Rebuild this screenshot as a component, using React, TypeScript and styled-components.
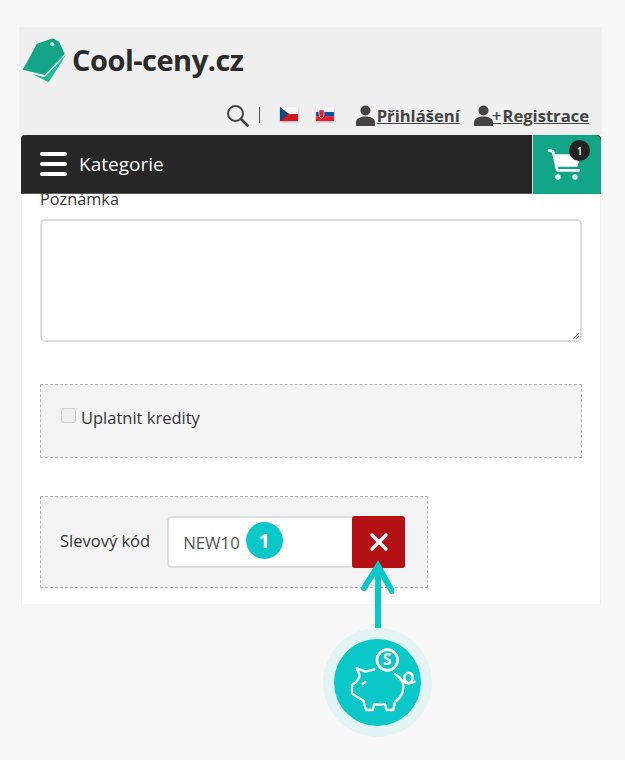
import styled, { createGlobalStyle } from 'styled-components';

const GlobalStyle = createGlobalStyle`
	html, body {
		margin: 0;
		padding: 0;
		background: #f7f7f7;
	}
	body {
		font-family: 'Open Sans', 'Liberation Sans', sans-serif;
		color: #333;
	}
`;

const Page = styled.div`
	position: relative;
	width: 625px;
	height: 760px;
	padding: 27px 23px 0 19px;
	box-sizing: border-box;
	overflow: hidden;
`;

const Header = styled.header`
	height: 108px;
	background: #efefef;
	box-sizing: border-box;
	padding: 10px 13px 0 3px;
	display: flex;
	flex-direction: column;
`;

const LogoRow = styled.div`
	display: flex;
	align-items: center;
	gap: 5px;
	height: 46px;
`;

const LogoText = styled.span`
	font-size: 29px;
	font-weight: 700;
	letter-spacing: -0.5px;
	color: #2b2b2b;
	line-height: 46px;
`;

const TopLinks = styled.div`
	display: flex;
	align-items: center;
	justify-content: flex-end;
	height: 30px;
	margin-top: 17px;
`;

const Divider = styled.span`
	width: 1px;
	height: 16px;
	background: #555;
	margin: 0 20px 0 10px;
`;

const Flag = styled.svg`
	display: block;
	margin-top: -2px;
	filter: drop-shadow(0 1px 1px rgba(0, 0, 0, 0.25));
`;

const FlagGap = styled.span`
	width: 18px;
`;

const UserLink = styled.a<{ $left: number }>`
	display: flex;
	align-items: center;
	margin-left: ${({ $left }) => $left}px;
	font-size: 16.6px;
	font-weight: 700;
	color: #444;
	text-decoration: underline;
	gap: 1px;
`;

const Plus = styled.span`
	font-size: 17px;
	font-weight: 600;
	color: #444;
	margin: 0 0 0 -3px;
	text-decoration: none;
`;

const Nav = styled.nav`
	display: flex;
	height: 59px;
	margin: 0 1px 0 2px;
	background: #272727;
	border-radius: 4px 4px 0 0;
	border-bottom: 1px solid #555;
	box-sizing: border-box;
`;

const MenuButton = styled.div`
	flex: 1;
	display: flex;
	align-items: center;
	padding-left: 19px;
	gap: 12px;
	color: #fff;
	font-size: 19px;
`;

const Burger = styled.div`
	display: flex;
	flex-direction: column;
	gap: 6px;
	width: 27px;

	i {
		display: block;
		height: 4px;
		border-radius: 2px;
		background: #fff;
	}
`;

const CartButton = styled.div`
	position: relative;
	width: 69px;
	height: 59px;
	background: #13a587;
	border-left: 1px solid #ddd;
	border-radius: 0 6px 0 0;
	box-sizing: border-box;
	display: flex;
	align-items: center;
	justify-content: center;
`;

const CartBadge = styled.span`
	position: absolute;
	top: 5px;
	right: 11px;
	width: 21px;
	height: 21px;
	border-radius: 50%;
	background: #222;
	color: #fff;
	font-size: 10px;
	font-weight: 600;
	display: flex;
	align-items: center;
	justify-content: center;
`;

const Content = styled.main`
	height: 410px;
	margin: 0 1px 0 2px;
	background: #fff;
	border: 1px solid #efefef;
	border-width: 0 1px;
	box-sizing: border-box;
	padding: 0 18px;
	overflow: hidden;
`;

const NoteLabel = styled.label`
	display: block;
	font-size: 16.3px;
	line-height: 22px;
	margin-top: -6px;
	color: #333;
`;

const NoteArea = styled.div`
	position: relative;
	height: 123px;
	margin-top: 9px;
	background: #fff;
	border: 2px solid #dedede;
	border-radius: 5px;
	box-sizing: border-box;
`;

const Dashed = styled.div<{ $width: string; $height: number; $top: number }>`
	display: flex;
	align-items: center;
	width: ${({ $width }) => $width};
	height: ${({ $height }) => $height}px;
	margin-top: ${({ $top }) => $top}px;
	background: #f3f3f3;
	border: 1px dashed #b5b5b5;
	box-sizing: border-box;
	padding-left: 19px;
	font-size: 16.5px;
	color: #333;
`;

const CheckBox = styled.span`
	width: 15px;
	height: 15px;
	margin: -12px 5px 0 1px;
	background: #efefef;
	border: 1px solid #ccc;
	border-radius: 3px;
	box-sizing: border-box;
`;

const CreditText = styled.span`
	margin-top: -7px;
`;

const CodeLabel = styled.span`
	margin-right: 17px;
	margin-top: -4px;
`;

const CodeField = styled.div`
	display: flex;
	align-items: center;
	width: 186px;
	height: 52px;
	background: #fff;
	border: 2px solid #dedede;
	border-right: 0;
	border-radius: 5px 0 0 5px;
	box-sizing: border-box;
	padding-left: 14px;
	font-size: 16.8px;
	color: #555;
`;

const CodeStep = styled.span`
	width: 37px;
	height: 37px;
	margin-left: 6px;
	margin-top: -3px;
	border-radius: 50%;
	background: #0bc8c8;
	color: #fff;
	font-size: 20px;
	font-weight: 700;
	display: flex;
	align-items: center;
	justify-content: center;
`;

const RemoveButton = styled.div`
	width: 53px;
	height: 52px;
	margin-left: -1px;
	background: #b40f12;
	border-radius: 3px;
	display: flex;
	align-items: center;
	justify-content: center;
`;

const ArrowMark = styled.svg`
	position: absolute;
	left: 360px;
	top: 560px;
`;

const PiggyHalo = styled.div`
	position: absolute;
	left: 323px;
	top: 628px;
	width: 109px;
	height: 109px;
	border-radius: 50%;
	background: #e3f4f5;
	display: flex;
	align-items: center;
	justify-content: center;
`;

const PiggyDisc = styled.div`
	width: 87px;
	height: 87px;
	border-radius: 50%;
	background: #0bc8c8;
	display: flex;
	align-items: center;
	justify-content: center;
`;

const UserIcon = ({ size = 21 }: { size?: number }) => (
	<svg width={size} height={size} viewBox="0 0 21 21" fill="#444">
		<circle cx="10.5" cy="5.5" r="5" />
		<path d="M1 21v-3.5C1 14 4.5 11.5 10.5 11.5S20 14 20 17.5V21Z" />
	</svg>
);

export default function App() {
	return (
		<>
			<GlobalStyle />
			<Page>
				<Header>
					<LogoRow>
						<svg width="45" height="46" viewBox="20 20 135 138">
							<path
								d="M22 118 L65 40 L108 25 Q114 23 118 27 L131 34 L147 68 Q148 72 145 75 L88 134 Z"
								fill="#13a587"
							/>
							<circle cx="111" cy="42" r="6" fill="#efefef" />
							<path d="M50 131 L88 141 L153 72 L100 156 Z" fill="#1dbd9c" />
						</svg>
						<LogoText>Cool-ceny.cz</LogoText>
					</LogoRow>
					<TopLinks>
						<svg width="23" height="23" viewBox="0 0 23 23" fill="none" stroke="#444" strokeWidth="2">
							<circle cx="9.5" cy="9.5" r="7.5" />
							<path d="M15 15l6.5 6.5" strokeWidth="2.6" strokeLinecap="round" />
						</svg>
						<Divider />
						<Flag width="18" height="14" viewBox="0 0 18 14">
							<rect width="18" height="7" fill="#f4f4f4" />
							<rect y="7" width="18" height="7" fill="#d7141a" />
							<path d="M0 0 L9 7 L0 14 Z" fill="#11457e" />
						</Flag>
						<FlagGap />
						<Flag width="18" height="14" viewBox="0 0 18 14">
							<rect width="18" height="5" fill="#f4f4f4" />
							<rect y="5" width="18" height="4.5" fill="#0b4ea2" />
							<rect y="9.5" width="18" height="4.5" fill="#ee1c25" />
							<path d="M3 3h5v5q0 2-2.5 3Q3 10 3 8Z" fill="#ee1c25" stroke="#fff" strokeWidth="0.6" />
						</Flag>
						<UserLink $left={21}>
							<UserIcon />
							Přihlášení
						</UserLink>
						<UserLink $left={13}>
							<UserIcon />
							<Plus>+</Plus>
							Registrace
						</UserLink>
					</TopLinks>
				</Header>
				<Nav>
					<MenuButton>
						<Burger>
							<i />
							<i />
							<i />
						</Burger>
						Kategorie
					</MenuButton>
					<CartButton>
						<svg width="44" height="33" viewBox="45 55 132 99" fill="#fff">
							<path
								d="M57 62L69 65L82 122H146"
								fill="none"
								stroke="#fff"
								strokeWidth="8"
								strokeLinecap="round"
								strokeLinejoin="round"
							/>
							<path d="M70 74H155L142 111H79Z" />
							<circle cx="84" cy="142" r="8" />
							<circle cx="135" cy="142" r="8" />
						</svg>
						<CartBadge>1</CartBadge>
					</CartButton>
				</Nav>
				<Content>
					<NoteLabel>Poznámka</NoteLabel>
					<NoteArea>
						<svg
							width="6"
							height="6"
							viewBox="0 0 6 6"
							style={{ position: 'absolute', right: 1, bottom: 1 }}
							stroke="#888"
							strokeWidth="0.8"
						>
							<path d="M0 6L6 0M3 6L6 3" />
						</svg>
					</NoteArea>
					<Dashed $width="100%" $height={74} $top={42}>
						<CheckBox />
						<CreditText>Uplatnit kredity</CreditText>
					</Dashed>
					<Dashed $width="388px" $height={92} $top={38}>
						<CodeLabel>Slevový kód</CodeLabel>
						<CodeField>
							NEW10
							<CodeStep>1</CodeStep>
						</CodeField>
						<RemoveButton>
							<svg width="20" height="20" viewBox="0 0 20 20" stroke="#fff" strokeWidth="3.4" strokeLinecap="round">
								<path d="M3 3l14 14M17 3L3 17" />
							</svg>
						</RemoveButton>
					</Dashed>
				</Content>
				<ArrowMark width="34" height="80" viewBox="0 0 34 80" fill="none" stroke="#0bc8c8" strokeWidth="6">
					<path d="M18 6V80" />
					<path d="M4 28L18 6L32 31" strokeLinecap="round" />
				</ArrowMark>
				<PiggyHalo>
					<PiggyDisc>
						<svg width="87" height="87" viewBox="-18 -3 261 261" fill="none" stroke="#fff" strokeWidth="7" strokeLinecap="round" strokeLinejoin="round">
							<circle cx="142" cy="60" r="31" strokeWidth="8" />
							<text x="142" y="76" textAnchor="middle" fontSize="46" fontWeight="700" fill="#fff" stroke="none">
								S
							</text>
							<path d="M103 88L76 95L50 84L60 108L50 125L36 135V160L50 170L70 182L78 210H98L103 192C115 195 125 195 135 192L140 210H160L165 185C180 175 190 158 190 140C190 125 178 110 165 103" />
							<path d="M178 112C186 128 205 135 224 125M205 131C186 118 192 96 208 99C224 102 220 124 205 131" />
							<path d="M68 132L76 126" />
						</svg>
					</PiggyDisc>
				</PiggyHalo>
			</Page>
		</>
	);
}
